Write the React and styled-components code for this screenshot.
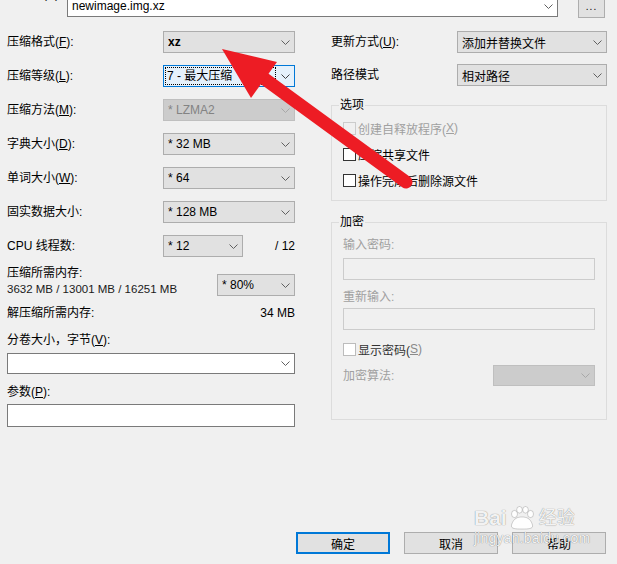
import React from "react";
import styled, { createGlobalStyle } from "styled-components";

const GlobalStyle = createGlobalStyle`
  html, body {
    margin: 0;
    padding: 0;
    background: #f0f0f0;
  }
  body {
    font-family: "Liberation Sans", "Noto Sans CJK SC", sans-serif;
    font-size: 12px;
    color: #000;
  }
`;

const Dialog = styled.div`
  position: relative;
  box-sizing: border-box;
  width: 617px;
  height: 564px;
  overflow: hidden;
  background: #f0f0f0;
  display: flex;
  flex-direction: column;
  padding: 0 10px 10px 7px;
`;

const TopRow = styled.div`
  display: flex;
  align-items: flex-start;
  height: 22px;
  margin-top: -5px;
`;

const ArchiveLabel = styled.div`
  width: 60px;
  line-height: 16px;
  margin-top: -9px;
`;

const BrowseButton = styled.div`
  box-sizing: border-box;
  width: 27px;
  height: 23px;
  margin-left: 20px;
  background: #e1e1e1;
  border: 1px solid #adadad;
  display: flex;
  align-items: center;
  justify-content: center;
  font-size: 10px;
  letter-spacing: 1px;
`;

const Columns = styled.div`
  display: flex;
  gap: 36px;
  margin-top: 14px;
`;

const LeftColumn = styled.div`
  width: 288px;
  display: flex;
  flex-direction: column;
`;

const RightColumn = styled.div`
  width: 276px;
  display: flex;
  flex-direction: column;
`;

const FormRow = styled.div`
  display: flex;
  align-items: center;
  justify-content: space-between;
  height: ${(p) => p.$h ?? 22}px;
  width: ${(p) => (p.$w ? `${p.$w}px` : "auto")};
  margin-top: ${(p) => p.$gap ?? 12}px;
  &:first-child {
    margin-top: 0;
  }
`;

const Label = styled.span`
  line-height: 16px;
  white-space: nowrap;
  color: ${(p) => (p.$disabled ? "#a0a0a0" : "#000")};
`;

const Key = styled.span`
  text-decoration: underline;
  color: ${(p) => (p.$dim ? "#8a8a8a" : "inherit")};
`;

const Dim = styled.span`
  color: #8a8a8a;
`;

const comboTheme = {
  normal: { bg: "#e1e1e1", border: "#adadad", color: "#000", chevron: "#606060" },
  disabled: { bg: "#cccccc", border: "#bfbfbf", color: "#838383", chevron: "#a8a8a8" },
  focus: { bg: "#e5f1fb", border: "#0078d7", color: "#000", chevron: "#404040" },
  white: { bg: "#ffffff", border: "#7a7a7a", color: "#000", chevron: "#606060" },
};

const ComboBox = styled.div`
  box-sizing: border-box;
  display: flex;
  align-items: center;
  flex: ${(p) => (p.$w ? "none" : "1")};
  width: ${(p) => (p.$w ? `${p.$w}px` : "auto")};
  height: ${(p) => p.$h ?? 22}px;
  padding-left: ${(p) => (p.$v === "focus" ? 1 : 4)}px;
  background: ${(p) => comboTheme[p.$v].bg};
  border: 1px solid ${(p) => comboTheme[p.$v].border};
  color: ${(p) => comboTheme[p.$v].color};
  font-weight: ${(p) => (p.$bold ? 700 : 400)};
  white-space: nowrap;
`;

const ComboText = styled.span`
  flex: 1;
  overflow: hidden;
`;

const FocusText = styled.span`
  box-sizing: border-box;
  flex: 1;
  height: 18px;
  line-height: 16px;
  padding-left: 1px;
  border: 1px dotted #000;
`;

const ChevronBox = styled.span`
  width: 18px;
  display: flex;
  justify-content: center;
  align-items: center;
`;

const Chevron = ({ color }) => (
  <svg width="9" height="5" viewBox="0 0 9 5">
    <polyline points="0.5,0.5 4.5,4.5 8.5,0.5" fill="none" stroke={color} strokeWidth="1" />
  </svg>
);

const Combo = ({ v = "normal", w, h, bold, children }) => (
  <ComboBox $v={v} $w={w} $h={h} $bold={bold}>
    {v === "focus" ? <FocusText>{children}</FocusText> : <ComboText>{children}</ComboText>}
    <ChevronBox>
      <Chevron color={comboTheme[v].chevron} />
    </ChevronBox>
  </ComboBox>
);

const ComboLine = styled.div`
  display: flex;
  margin-top: ${(p) => p.$top ?? 0}px;
`;

const TextInput = styled.div`
  box-sizing: border-box;
  height: ${(p) => p.$h ?? 22}px;
  margin-top: ${(p) => p.$top ?? 0}px;
  background: ${(p) => (p.$disabled ? "#f0f0f0" : "#fff")};
  border: 1px solid ${(p) => (p.$disabled ? "#cccccc" : "#7a7a7a")};
`;

const MemoryBlock = styled.div`
  display: flex;
  justify-content: space-between;
  align-items: flex-start;
  margin-top: 8px;
  height: 32px;
`;

const MemoryText = styled.div`
  display: flex;
  flex-direction: column;
  line-height: 16px;
`;

const MemoryNumbers = styled.span`
  font-size: 11.5px;
  color: #1a1a1a;
`;

const MemoryCombo = styled.div`
  margin-top: 9px;
`;

const InfoRow = styled.div`
  display: flex;
  justify-content: space-between;
  line-height: 16px;
  margin-top: 8px;
`;

const FieldLabel = styled.div`
  line-height: 16px;
  margin-top: ${(p) => p.$top ?? 0}px;
  color: ${(p) => (p.$disabled ? "#a0a0a0" : "#000")};
`;

const Group = styled.fieldset`
  margin: ${(p) => p.$top ?? 0}px 0 0;
  padding: ${(p) => p.$pad};
  border: 1px solid #dcdcdc;
  display: flex;
  flex-direction: column;
  min-width: 0;
`;

const Legend = styled.legend`
  padding: 0 1px;
  margin-left: -4px;
  line-height: 16px;
`;

const CheckRow = styled.div`
  display: flex;
  align-items: center;
  height: 16px;
  margin-top: ${(p) => p.$top ?? 0}px;
  color: ${(p) => (p.$disabled ? "#a0a0a0" : p.$soft ? "#333" : "#000")};
`;

const CheckBox = styled.span`
  box-sizing: border-box;
  width: 13px;
  height: 13px;
  margin-right: 2px;
  flex: none;
  border: 1px solid ${(p) => (p.$disabled ? "#cccccc" : p.$soft ? "#bcbcbc" : "#333")};
  background: ${(p) => (p.$disabled ? "transparent" : "#fff")};
`;

const ButtonBar = styled.div`
  margin-top: auto;
  display: flex;
  justify-content: flex-end;
  gap: 14px;
  padding-right: 1px;
`;

const Button = styled.div`
  box-sizing: border-box;
  width: 94px;
  height: 22px;
  display: flex;
  align-items: center;
  justify-content: center;
  background: #e1e1e1;
  border: ${(p) => (p.$primary ? "2px solid #0078d7" : "1px solid #adadad")};
`;

const ArrowLayer = styled.svg`
  position: absolute;
  left: 0;
  top: 0;
  pointer-events: none;
`;

const Watermark = styled.div`
  position: absolute;
  left: 474px;
  top: 506px;
  display: flex;
  flex-direction: column;
  color: rgba(255, 255, 255, 0.92);
  text-shadow: 0 0 1px rgba(0, 0, 0, 0.4), 0 0 1px rgba(0, 0, 0, 0.2);
  pointer-events: none;
`;

const MarkTop = styled.div`
  display: flex;
  align-items: center;
  gap: 1px;
  font-weight: 700;
  font-size: 21px;
  line-height: 24px;
`;

const MarkSub = styled.span`
  font-weight: 400;
  font-size: 18px;
  margin-left: 2px;
`;

const MarkUrl = styled.div`
  font-size: 14px;
  line-height: 15px;
  margin-top: 1px;
  letter-spacing: 0.2px;
`;

const Paw = () => (
  <svg width="28" height="24" viewBox="0 0 28 24">
    <g fill="rgba(255,255,255,0.92)" stroke="rgba(0,0,0,0.25)" strokeWidth="0.7">
      <ellipse cx="6.5" cy="8" rx="3" ry="3.6" />
      <ellipse cx="11.5" cy="3.8" rx="2.8" ry="3.3" />
      <ellipse cx="17.5" cy="3.8" rx="2.8" ry="3.3" />
      <ellipse cx="22.5" cy="8" rx="3" ry="3.6" />
      <path d="M3.5 19 C5.5 12 10 11 14 11 C18 11 22.5 12 24.5 19 C25.5 23 20 23 14 23 C8 23 2.5 23 3.5 19 Z" />
    </g>
  </svg>
);

export default function App() {
  return (
    <>
      <GlobalStyle />
      <Dialog>
        <TopRow>
          <ArchiveLabel>
            压缩包(<Key>A</Key>):
          </ArchiveLabel>
          <Combo v="white" w={491} h={22}>
            newimage.img.xz
          </Combo>
          <BrowseButton>...</BrowseButton>
        </TopRow>

        <Columns>
          <LeftColumn>
            <FormRow>
              <Label>
                压缩格式(<Key>F</Key>):
              </Label>
              <Combo w={132} bold>
                xz
              </Combo>
            </FormRow>
            <FormRow>
              <Label>
                压缩等级(<Key>L</Key>):
              </Label>
              <Combo v="focus" w={132}>
                7 - 最大压缩
              </Combo>
            </FormRow>
            <FormRow>
              <Label>
                压缩方法(<Key>M</Key>):
              </Label>
              <Combo v="disabled" w={132}>
                * LZMA2
              </Combo>
            </FormRow>
            <FormRow>
              <Label>
                字典大小(<Key>D</Key>):
              </Label>
              <Combo w={132}>* 32 MB</Combo>
            </FormRow>
            <FormRow>
              <Label>
                单词大小(<Key>W</Key>):
              </Label>
              <Combo w={132}>* 64</Combo>
            </FormRow>
            <FormRow>
              <Label>固实数据大小:</Label>
              <Combo w={132}>* 128 MB</Combo>
            </FormRow>
            <FormRow>
              <Label>CPU 线程数:</Label>
              <FormRow $gap={0} $w={132}>
                <Combo w={80}>* 12</Combo>
                <Label>/ 12</Label>
              </FormRow>
            </FormRow>

            <MemoryBlock>
              <MemoryText>
                <span>压缩所需内存:</span>
                <MemoryNumbers>3632 MB / 13001 MB / 16251 MB</MemoryNumbers>
              </MemoryText>
              <MemoryCombo>
                <Combo w={78}>* 80%</Combo>
              </MemoryCombo>
            </MemoryBlock>

            <InfoRow>
              <span>解压缩所需内存:</span>
              <span>34 MB</span>
            </InfoRow>

            <FieldLabel $top={11}>
              分卷大小，字节(<Key>V</Key>):
            </FieldLabel>
            <ComboLine $top={5}>
              <Combo v="white" h={21}></Combo>
            </ComboLine>

            <FieldLabel $top={10}>
              参数(<Key>P</Key>):
            </FieldLabel>
            <TextInput $top={4} $h={23} />
          </LeftColumn>

          <RightColumn>
            <FormRow>
              <Label>
                更新方式(<Key>U</Key>):
              </Label>
              <Combo w={150}>添加并替换文件</Combo>
            </FormRow>
            <FormRow $gap={11}>
              <Label>路径模式</Label>
              <Combo w={150}>相对路径</Combo>
            </FormRow>

            <Group $top={11} $pad="7px 11px 12px">
              <Legend>选项</Legend>
              <CheckRow $disabled>
                <CheckBox $disabled />
                创建自释放程序(<Key>X</Key>)
              </CheckRow>
              <CheckRow $top={10}>
                <CheckBox />
                压缩共享文件
              </CheckRow>
              <CheckRow $top={10}>
                <CheckBox />
                操作完成后删除源文件
              </CheckRow>
            </Group>

            <Group $top={13} $pad="7px 11px 33px">
              <Legend>加密</Legend>
              <FieldLabel $disabled>输入密码:</FieldLabel>
              <TextInput $disabled $top={5} />
              <FieldLabel $disabled $top={9}>
                重新输入:
              </FieldLabel>
              <TextInput $disabled $top={3} />
              <CheckRow $soft $top={11}>
                <CheckBox $soft />
                显示密码(<Key $dim>S</Key>
                <Dim>)</Dim>
              </CheckRow>
              <FormRow $gap={8} $h={21}>
                <Label $disabled>加密算法:</Label>
                <Combo v="disabled" w={102} h={21}></Combo>
              </FormRow>
            </Group>
          </RightColumn>
        </Columns>

        <ButtonBar>
          <Button $primary>确定</Button>
          <Button>取消</Button>
          <Button>帮助</Button>
        </ButtonBar>

        <Watermark>
          <MarkTop>
            Bai
            <Paw />
            <MarkSub>经验</MarkSub>
          </MarkTop>
          <MarkUrl>jingyan.baidu.com</MarkUrl>
        </Watermark>

        <ArrowLayer width="617" height="564" viewBox="0 0 617 564">
          <line x1="262" y1="77" x2="406" y2="182" stroke="#ed1c24" strokeWidth="13" strokeLinecap="round" />
          <polygon points="222,49 251,98 277,62" fill="#ed1c24" />
        </ArrowLayer>
      </Dialog>
    </>
  );
}
